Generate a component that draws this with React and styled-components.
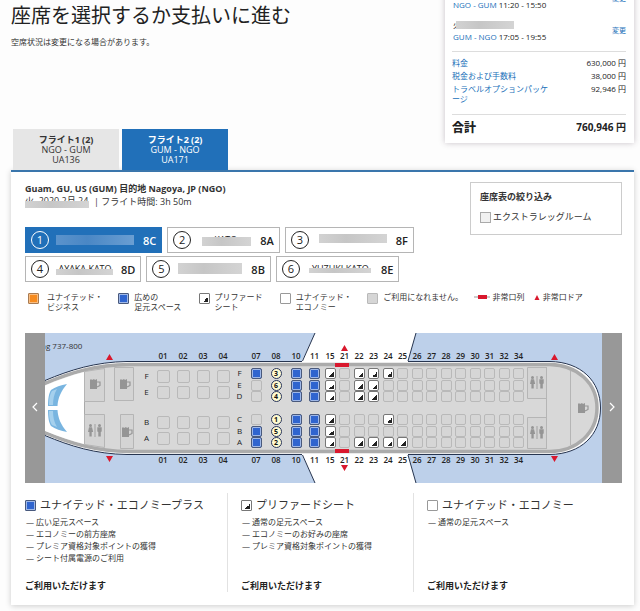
import React, { useState } from "react";
import styled, { createGlobalStyle, css } from "styled-components";

const BLUE = "#2170b9";
const SEAT_BLUE = "#2f64cf";
const RED = "#d9182d";

const GlobalStyles = createGlobalStyle`
  * {
    box-sizing: border-box;
  }

  body {
    margin: 0;
    background: #fdfdfd;
    color: #333;
    font-family: "Open Sans", "Noto Sans CJK JP", sans-serif;
    font-size: 8px;
    line-height: 10px;
  }

  button {
    font-family: inherit;
    padding: 0;
    cursor: pointer;
  }
`;

const Page = styled.main`
  padding: 0 6px 6px 11px;
`;

const Top = styled.header`
  display: grid;
  grid-template-columns: 1fr 189px;
`;

const Intro = styled.div`
  display: flex;
  flex-direction: column;
  justify-content: space-between;
`;

const Title = styled.h1`
  margin: 0;
  padding-top: 2px;
  font-size: 20px;
  font-weight: 400;
  line-height: 28px;
  color: #222;
`;

const Note = styled.p`
  margin: 6px 0 0;
  line-height: 12px;
`;

const Tabs = styled.div`
  display: flex;
  gap: 3px;
  padding-left: 2px;
`;

const Tab = styled.button`
  width: 106px;
  height: 41px;
  border: 0;
  background: ${(props) => (props.$active ? BLUE : "#e6e6e6")};
  color: ${(props) => (props.$active ? "#fff" : "#333")};
  font-size: 9px;
  line-height: 10px;

  strong,
  span {
    display: block;
  }
`;

const Summary = styled.aside`
  margin: -19px 0 27px;
  padding: 6px 8px 7px 7px;
  background: #fff;
  box-shadow: 0 0 6px rgba(60, 40, 60, 0.28);
`;

const Segment = styled.div`
  display: flex;
  justify-content: space-between;
  align-items: center;
  height: 24px;
  margin-bottom: 8px;
  padding-left: 1px;
  line-height: 12px;
  color: #222;
`;

const Link = styled.a`
  color: ${BLUE};
  font-size: ${(props) => (props.$small ? "7px" : "8px")};
  text-decoration: none;
`;

const Masked = styled.span`
  position: relative;
  display: block;
  width: ${(props) => props.$width}px;
  height: 12px;
  line-height: 12px;
  white-space: nowrap;

  &::after {
    content: "";
    position: absolute;
    inset: ${(props) => props.$inset || "1px 0"};
    background: ${(props) =>
      props.$light
        ? "linear-gradient(90deg, #5b93cc, #4a87c5 40%, #6a9ed2)"
        : "linear-gradient(90deg, #d2d2d2, #c6c6c6 40%, #d4d4d4)"};
  }
`;

const Fees = styled.dl`
  display: grid;
  grid-template-columns: 97px 1fr;
  row-gap: 3px;
  margin: 0;
  padding: 6px 0 10px;
  border: solid #ddd;
  border-width: 1px 0;

  dt,
  dd {
    margin: 0;
  }

  dd {
    text-align: right;
    color: #222;
  }
`;

const Total = styled.div`
  display: flex;
  justify-content: space-between;
  align-items: center;
  padding-top: 4px;
  font-size: 10px;
  font-weight: 700;
  line-height: 17px;
  color: #222;

  b {
    font-size: 12px;
  }
`;

const Panel = styled.section`
  padding: 10px 12px 13px 14px;
  border-top: 2px solid #3a76ac;
  background: #fff;
  box-shadow: 0 1px 6px rgba(0, 0, 0, 0.2);
`;

const PanelHead = styled.div`
  display: flex;
  justify-content: space-between;
  align-items: flex-start;
`;

const FlightInfo = styled.div`
  flex: 1;
  font-size: 9px;
  line-height: 13px;
`;

const Route = styled.h2`
  margin: 0;
  font-size: 9px;
  font-weight: 700;
  line-height: 13px;
`;

const FlightDate = styled.div`
  display: flex;
  gap: 4px;
`;

const Travelers = styled.div`
  display: flex;
  flex-wrap: wrap;
  gap: 3px 5px;
  margin-top: 19px;
`;

const Traveler = styled.button`
  display: flex;
  align-items: center;
  gap: 7px;
  height: 26px;
  padding: 0 5px;
  border: 1px solid ${(props) => (props.$active ? BLUE : "#b5b5b5")};
  background: ${(props) => (props.$active ? BLUE : "#fff")};
  color: ${(props) => (props.$active ? "#fff" : "#222")};
  font-size: 9px;

  b {
    font-size: 11px;
    font-weight: 600;
  }
`;

const TravelerNumber = styled.span`
  width: 18px;
  height: 18px;
  border: 1px solid currentColor;
  border-radius: 50%;
  font-size: 11px;
  line-height: 16px;
  text-align: center;
`;

const Filter = styled.fieldset`
  width: 152px;
  height: 53px;
  margin: 0;
  padding: 8px 9px;
  border: 1px solid #ccc;
  font-size: 9px;
  line-height: 12px;
`;

const FilterTitle = styled.strong`
  display: block;
  margin-bottom: 8px;
`;

const CheckLabel = styled.label`
  display: flex;
  align-items: center;
  gap: 2px;

  input {
    appearance: none;
    width: 11px;
    height: 11px;
    margin: 0;
    border: 1px solid #aaa;
    background: #f1f1f1;
  }

  input:checked {
    background: ${BLUE};
  }
`;

const Legend = styled.ul`
  display: grid;
  grid-template-columns: 90fr 80fr 81fr 87fr 106fr 60fr 88fr;
  margin: 10px 0 21px;
  padding: 0 0 0 3px;
  list-style: none;
  white-space: nowrap;
`;

const LegendItem = styled.li`
  display: flex;
  gap: ${(props) => props.$gap || 5}px;
  height: 20px;
`;

const seatLook = {
  business: css`
    border-color: #a87b52;
    background: #f68b1f;
    box-shadow: inset 0 0 0 1px #f9bd80;
  `,
  plus: css`
    border-color: #49597c;
    background: ${SEAT_BLUE};
    box-shadow: inset 0 0 0 1px #9fb8e8;
  `,
  preferred: css`
    border-color: #777;
    background: linear-gradient(135deg, transparent 50%, #222 50%) right 1px
        bottom 1px / 5px 5px no-repeat,
      #fff;
  `,
  economy: css`
    border-color: #999;
    background: #fff;
  `,
  none: css`
    border-color: #b9b9b9;
    background: #d6d6d6;
  `,
};

const Swatch = styled.span`
  flex: none;
  width: 11px;
  height: 11px;
  margin-top: 1px;
  border: 1px solid;
  border-radius: 1px;
  ${(props) => seatLook[props.$kind]}
`;

const ExitIcon = styled.svg`
  flex: none;
  height: 10px;
`;

const SeatMap = styled.div`
  display: flex;
  height: 150px;
  background: #bdd0ea;
`;

const Scroll = styled.button`
  flex: none;
  width: 20px;
  border: 0;
  background: #989898;
`;

const Viewport = styled.div`
  position: relative;
  flex: 1;
  overflow: hidden;
`;

const Aircraft = styled.svg`
  position: absolute;
  top: 0;
  left: 0;
`;

const Model = styled.span`
  position: absolute;
  top: 7px;
  left: -4px;
  line-height: 12px;
`;

const Cabin = styled.div`
  position: relative;
  display: flex;
  width: 481px;
  margin-left: 95px;
  padding-top: 17px;
`;

const Column = styled.div`
  flex: none;
  width: ${(props) => props.$width}px;
  text-align: center;
  line-height: 12px;
  color: #222;
`;

const AftColumns = styled.div`
  display: grid;
  grid-template-columns: repeat(14, 1fr);
  width: 203px;
`;

const RowNumber = styled.div`
  height: 12px;
  font-weight: 600;
`;

const Block = styled.div`
  display: flex;
  flex-direction: column;
  align-items: center;
  justify-content: ${(props) => (props.$wide ? "center" : "space-between")};
  gap: ${(props) => (props.$wide ? "3px" : 0)};
  height: 34px;
  margin: 6px 0 12px;
  padding-bottom: ${(props) => (props.$wide ? "2px" : 0)};

  & + & {
    margin-bottom: 6px;
  }
`;

const Seat = styled.button`
  width: ${(props) => (props.$wide ? 13 : 11)}px;
  height: ${(props) => (props.$wide ? 13 : 11)}px;
  border: 1px solid;
  border-radius: 2px;
  ${(props) => seatLook[props.$kind]}
`;

const TakenSeat = styled.button`
  width: 11px;
  height: 11px;
  border: 1px solid #27345c;
  border-radius: 50%;
  background: #fffbd0;
  color: #111;
  font-size: 7px;
  font-weight: 700;
  line-height: 9px;
`;

const Letter = styled.span`
  height: ${(props) => (props.$wide ? 13 : 11)}px;
  line-height: ${(props) => (props.$wide ? 12 : 10)}px;
`;

const Cards = styled.div`
  display: grid;
  grid-template-columns: 202fr 186fr 209fr;
  margin-top: 10px;
`;

const Card = styled.section`
  display: flex;
  flex-direction: column;
  height: 99px;
  padding-left: 13px;
  border-left: 1px solid #e2e2e2;

  &:first-child {
    padding-left: 0;
    border-left: 0;
  }
`;

const CardTitle = styled.h3`
  display: flex;
  align-items: center;
  gap: 4px;
  margin: 4px 0;
  font-size: 11px;
  font-weight: 400;
  line-height: 15px;
  white-space: nowrap;
`;

const Features = styled.ul`
  flex: 1;
  margin: 0;
  padding: 0 0 0 1px;
  list-style: none;
  line-height: 12px;

  li::before {
    content: "— ";
  }
`;

const Available = styled.strong`
  font-size: 9px;
  line-height: 13px;
  color: #222;
`;

const travelers = [
  { id: 1, seat: "8C", width: 80, inset: "1px 2px 1px 0" },
  { id: 2, seat: "8A", width: 55, name: "KATO", inset: "3px 2px 0 4px" },
  { id: 3, seat: "8F", width: 73, inset: "0 2px 3px 3px" },
  { id: 4, seat: "8D", width: 58, name: "AYAKA KATO", inset: "6px 1px 0 0" },
  { id: 5, seat: "8B", width: 67, inset: "0 2px 1px 1px" },
  { id: 6, seat: "8E", width: 67, name: "YUZUKI KATO", inset: "5px 3px 2px 2px" },
];

// p: economy plus, r: preferred, n: not available, digits: selected traveler
// seats run F E D, C B A
const forward = [
  ["07", "pnn", "npp"],
  ["08", "364", "152"],
  ["10", "ppp", "ppp"],
  ["11", "ppp", "ppp"],
];

const aft = [
  ["15", "rrr", "rrr"],
  ["21", "nnn", "nnn"],
  ["22", "rrr", "nnr"],
  ["23", "rrr", "nnr"],
  ["24", "rnn", "rnr"],
  ["25", "nnn", "nnr"],
  ["26", "nnn", "nnn"],
  ["27", "nnn", "nnn"],
  ["28", "nnn", "nnn"],
  ["29", "nnn", "nnn"],
  ["30", "nnn", "nnn"],
  ["31", "nnn", "nnn"],
  ["32", "nnn", "nnn"],
  ["34", "nnn", "nnn"],
];

const kinds = { p: "plus", r: "preferred", n: "none" };

const cards = [
  {
    kind: "plus",
    title: "ユナイテッド・エコノミープラス",
    features: [
      "広い足元スペース",
      "エコノミーの前方座席",
      "プレミア資格対象ポイントの獲得",
      "シート付属電源のご利用",
    ],
  },
  {
    kind: "preferred",
    title: "プリファードシート",
    features: [
      "通常の足元スペース",
      "エコノミーのお好みの座席",
      "プレミア資格対象ポイントの獲得",
    ],
  },
  {
    kind: "economy",
    title: "ユナイテッド・エコノミー",
    features: ["通常の足元スペース"],
  },
];

const SeatBlock = ({ row, seats, letters, wide }) => (
  <Block $wide={wide}>
    {seats.split("").map((code, i) => {
      const label = `${row}${letters[i]}`;
      return kinds[code] ? (
        <Seat key={label} aria-label={label} $kind={kinds[code]} $wide={wide} />
      ) : (
        <TakenSeat key={label} aria-label={label}>
          {code}
        </TakenSeat>
      );
    })}
  </Block>
);

const SeatColumn = ({ row, top, bottom, width, wide }) => (
  <Column $width={width}>
    <RowNumber>{row}</RowNumber>
    <SeatBlock row={row} seats={top} letters={wide ? "FE" : "FED"} wide={wide} />
    <SeatBlock row={row} seats={bottom} letters={wide ? "BA" : "CBA"} wide={wide} />
    <RowNumber>{row}</RowNumber>
  </Column>
);

const LetterColumn = ({ top, bottom, wide }) => (
  <Column $width={13}>
    <RowNumber />
    {[top, bottom].map((letters) => (
      <Block key={letters} $wide={wide}>
        {letters.split("").map((letter) => (
          <Letter key={letter} $wide={wide}>
            {letter}
          </Letter>
        ))}
      </Block>
    ))}
  </Column>
);

const Mug = ({ x, y }) => (
  <g transform={`translate(${x} ${y})`}>
    <path d="M0 1L1 0L2 1L4 0L5 1L7 0V10H0Z" fill="#959595" />
    <path d="M7 3H10V6.5L7 8" fill="none" stroke="#959595" strokeWidth="1.2" />
  </g>
);

const Lavatory = ({ x, y }) => (
  <g transform={`translate(${x} ${y})`} fill="#959595">
    <circle cx="2.5" cy="1.5" r="1.5" />
    <path d="M1 3.3H4L5.2 8H3.7V12.5H1.4V8H0Z" />
    <path d="M6.6 0H7.4V13H6.6Z" />
    <circle cx="11.5" cy="1.5" r="1.5" />
    <path d="M9.3 3.3H13.7V7.5L12.8 8V12.5H10.3V8L9.3 7.5Z" />
  </g>
);

const Hull = () => (
  <Aircraft width="556" height="150" viewBox="0 0 556 150" aria-hidden="true">
    <path d="M270 0H371L363 28V122L371 150H270L257 122V28Z" fill="#fff" />
    <path
      d="M0 47.5C25 37 50 29 82 28.5H505C536 29 555.5 48 555.5 75S536 121 505 121.5H82C50 121 25 113 0 102.5Z"
      fill="#fff"
      stroke="#26344f"
    />
    <path
      d="M-6 53C25 39 52 31.8 84 31.5H505C532 32 552 50 552 75S532 118 505 118.5H84C52 118.2 25 111 -6 97Z"
      fill="#d8d8d8"
      stroke="#ababab"
      strokeWidth="3.5"
    />
    <path d="M0 52.5C14 46.5 27 42 39 39V111C27 108 14 103.5 0 98Z" fill="#fff" />
    <path d="M39.5 39V111" stroke="#aaa" />
    <path d="M257 28H363M257 122H363" stroke="#fff" strokeWidth="2" />
    <path
      d="M270 0L257.5 28M371 0L363 28M270 150L257.5 122M371 150L363 122"
      fill="none"
      stroke="#26344f"
    />
    <path d="M3 73C3 65 4 60 6 57C10 54 16 52 22 51C16 58 13 65 12.5 73Z" fill="#79b5e0" />
    <path d="M3 77C3 85 4 90 6 93C10 96 16 98 22 99C16 92 13 85 12.5 77Z" fill="#79b5e0" />
    <path
      d="M4 72C4 65 5 61 7 58L12 56C9 61 8 66 8 72ZM4 78C4 85 5 89 7 92L12 94C9 89 8 84 8 78Z"
      fill="#a5d0ed"
    />
    <g fill="#d4d4d4" stroke="#b5b5b5">
      <path d="M39.5 38.5L59.5 35.5V68.5H39.5Z" />
      <path d="M69.5 34.5H88.5V67.5H69.5Z" />
      <path d="M39.5 81.5H59.5V114.5L39.5 111.5Z" />
      <path d="M75.5 81.5H88.5V115.5H75.5Z" />
      <path d="M482.5 34.5H501.5V65.5H482.5Z" />
      <path d="M482.5 84.5H501.5V115.5H482.5Z" />
      <path d="M501.5 34V116M525.5 38V112" fill="none" />
    </g>
    <Mug x={45} y={46} />
    <Mug x={75} y={46} />
    <Mug x={77} y={94} />
    <Mug x={533} y={70} />
    <Lavatory x={43} y={91} />
    <Lavatory x={485} y={43} />
    <Lavatory x={485} y={93} />
    <g fill={RED}>
      <path d="M290 30H304V34H290ZM290 116H304V120H290Z" />
      <path d="M299.5 12L303 18H296ZM299.5 138L303 132H296Z" />
      <path d="M64.5 21L68 27H61ZM64.5 129L68 123H61Z" />
      <path d="M509.5 21L513 27H506ZM509.5 129L513 123H506Z" />
    </g>
  </Aircraft>
);

const Chevron = ({ d }) => (
  <svg width="8" height="12" viewBox="0 0 8 12" fill="none" stroke="#fff" strokeWidth="1.2">
    <path d={d} />
  </svg>
);

const App = () => {
  const [flight, setFlight] = useState(2);
  const [traveler, setTraveler] = useState(1);
  const [legroom, setLegroom] = useState(false);

  return (
    <>
      <GlobalStyles />
      <Page>
        <Top>
          <Intro>
            <div>
              <Title>座席を選択するか支払いに進む</Title>
              <Note>空席状況は変更になる場合があります。</Note>
            </div>
            <Tabs>
              <Tab $active={flight === 1} onClick={() => setFlight(1)}>
                <strong>フライト1 (2)</strong>
                <span>NGO - GUM</span>
                <span>UA136</span>
              </Tab>
              <Tab $active={flight === 2} onClick={() => setFlight(2)}>
                <strong>フライト2 (2)</strong>
                <span>GUM - NGO</span>
                <span>UA171</span>
              </Tab>
            </Tabs>
          </Intro>
          <Summary>
            <Segment>
              <div>
                <Masked $width={61} />
                <Link href="#flight1">NGO - GUM</Link> 11:20 - 15:50
              </div>
              <Link href="#change1" $small>
                変更
              </Link>
            </Segment>
            <Segment>
              <div>
                <Masked $width={61} $inset="2px 0 2px 3px">
                  火
                </Masked>
                <Link href="#flight2">GUM - NGO</Link> 17:05 - 19:55
              </div>
              <Link href="#change2" $small>
                変更
              </Link>
            </Segment>
            <Fees>
              <dt>
                <Link href="#fare">料金</Link>
              </dt>
              <dd>630,000 円</dd>
              <dt>
                <Link href="#taxes">税金および手数料</Link>
              </dt>
              <dd>38,000 円</dd>
              <dt>
                <Link href="#options">トラベルオプションパッケージ</Link>
              </dt>
              <dd>92,946 円</dd>
            </Fees>
            <Total>
              <b>合計</b>
              <span>760,946 円</span>
            </Total>
          </Summary>
        </Top>

        <Panel>
          <PanelHead>
            <FlightInfo>
              <Route>Guam, GU, US (GUM) 目的地 Nagoya, JP (NGO)</Route>
              <FlightDate>
                <Masked $width={65} $inset="6px 1px -1px 0">
                  火, 2020 2月 24
                </Masked>
                <span>| フライト時間: 3h 50m</span>
              </FlightDate>
              <Travelers>
                {travelers.map(({ id, seat, width, name, inset }) => (
                  <Traveler
                    key={id}
                    $active={traveler === id}
                    onClick={() => setTraveler(id)}
                  >
                    <TravelerNumber>{id}</TravelerNumber>
                    <Masked $width={width} $inset={inset} $light={traveler === id}>
                      {name}
                    </Masked>
                    <b>{seat}</b>
                  </Traveler>
                ))}
              </Travelers>
            </FlightInfo>
            <Filter>
              <FilterTitle>座席表の絞り込み</FilterTitle>
              <CheckLabel>
                <input
                  type="checkbox"
                  checked={legroom}
                  onChange={() => setLegroom(!legroom)}
                />
                エクストラレッグルーム
              </CheckLabel>
            </Filter>
          </PanelHead>

          <Legend>
            <LegendItem $gap={8}>
              <Swatch $kind="business" />
              <span>
                ユナイテッド・
                <br />
                ビジネス
              </span>
            </LegendItem>
            <LegendItem>
              <Swatch $kind="plus" />
              <span>
                広めの
                <br />
                足元スペース
              </span>
            </LegendItem>
            <LegendItem>
              <Swatch $kind="preferred" />
              <span>
                プリファード
                <br />
                シート
              </span>
            </LegendItem>
            <LegendItem>
              <Swatch $kind="economy" />
              <span>
                ユナイテッド・
                <br />
                エコノミー
              </span>
            </LegendItem>
            <LegendItem>
              <Swatch $kind="none" />
              <span>ご利用になれません。</span>
            </LegendItem>
            <LegendItem $gap={3}>
              <ExitIcon width="16" viewBox="0 0 16 10">
                <path d="M0 4H16V6H0Z" fill="#ccc" />
                <path d="M4 3H13V7H4Z" fill={RED} />
              </ExitIcon>
              <span>非常口列</span>
            </LegendItem>
            <LegendItem $gap={3}>
              <ExitIcon width="6" viewBox="0 0 6 10">
                <path d="M3 3L5.5 8H0.5Z" fill={RED} />
              </ExitIcon>
              <span>非常口ドア</span>
            </LegendItem>
          </Legend>

          <SeatMap>
            <Scroll aria-label="前へ">
              <Chevron d="M6 2L2 6L6 10" />
            </Scroll>
            <Viewport>
              <Hull />
              <Model>ng 737-800</Model>
              <Cabin>
                <LetterColumn top="FE" bottom="BA" wide />
                {["01", "02", "03", "04"].map((row) => (
                  <SeatColumn key={row} row={row} top="nn" bottom="nn" width={20} wide />
                ))}
                <LetterColumn top="FED" bottom="CBA" />
                {forward.map(([row, top, bottom]) => (
                  <SeatColumn
                    key={row}
                    row={row}
                    top={top}
                    bottom={bottom}
                    width={row === "11" ? 17 : 20}
                  />
                ))}
                <AftColumns>
                  {aft.map(([row, top, bottom]) => (
                    <SeatColumn key={row} row={row} top={top} bottom={bottom} width={14} />
                  ))}
                </AftColumns>
              </Cabin>
            </Viewport>
            <Scroll aria-label="次へ">
              <Chevron d="M2 2L6 6L2 10" />
            </Scroll>
          </SeatMap>

          <Cards>
            {cards.map(({ kind, title, features }) => (
              <Card key={kind}>
                <CardTitle>
                  <Swatch $kind={kind} />
                  {title}
                </CardTitle>
                <Features>
                  {features.map((feature) => (
                    <li key={feature}>{feature}</li>
                  ))}
                </Features>
                <Available>ご利用いただけます</Available>
              </Card>
            ))}
          </Cards>
        </Panel>
      </Page>
    </>
  );
};

export default App;
